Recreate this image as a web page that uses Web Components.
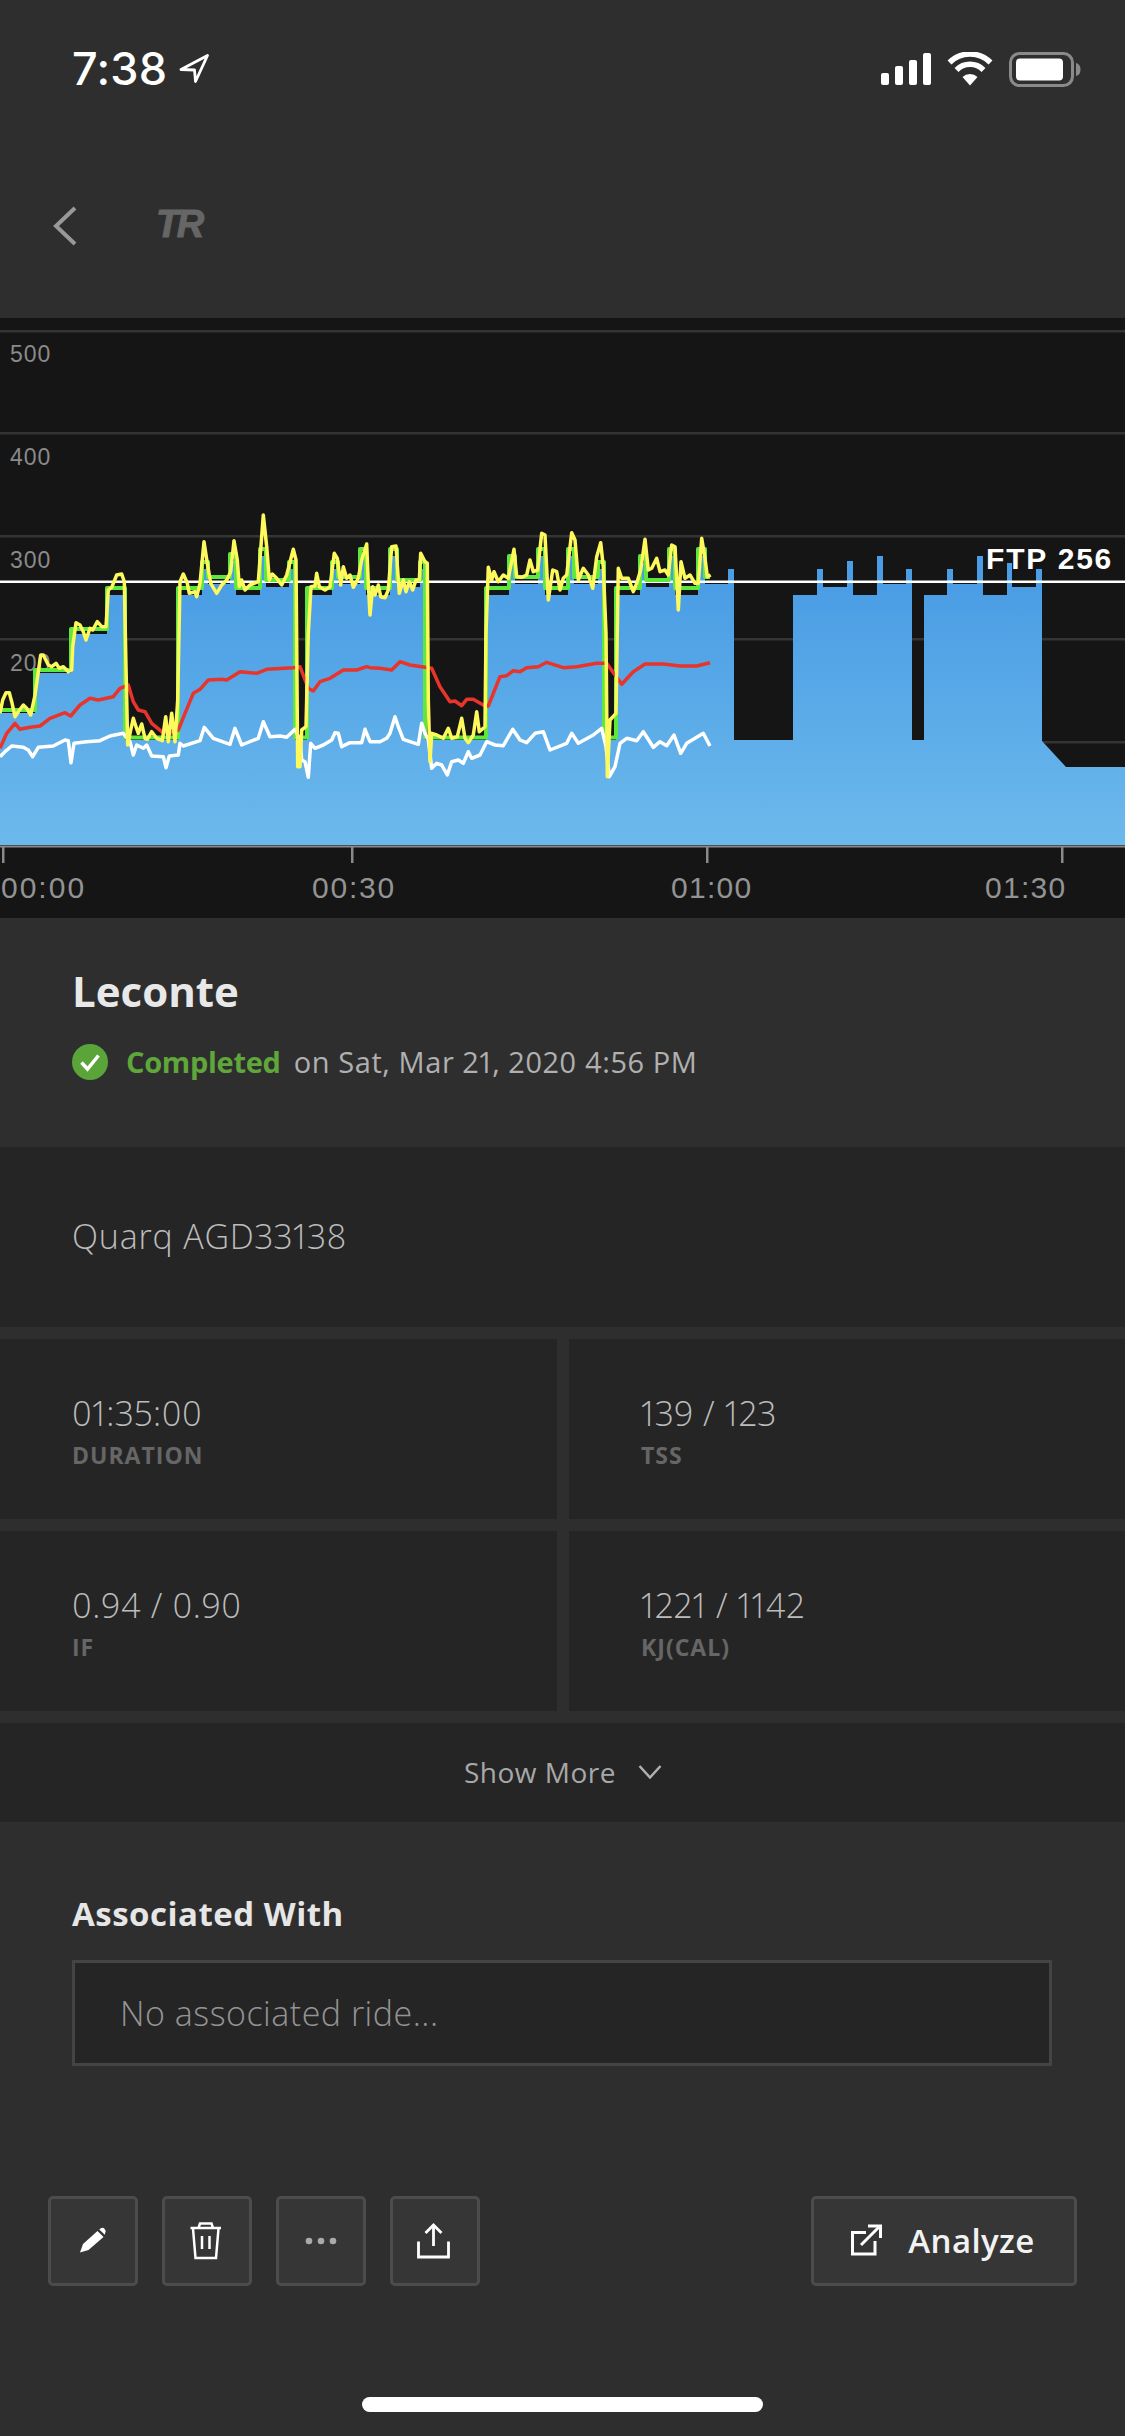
<!DOCTYPE html>
<html>
<head>
<meta charset="utf-8">
<style>
  html, body { margin: 0; padding: 0; background: #2e2e2e; }
  body { width: 1125px; height: 2436px; overflow: hidden; display: flex; flex-direction: column; font-family: "Open Sans", Lato, sans-serif; font-variant-numeric: proportional-nums; }
</style>
</head>
<body>
<status-bar time="7:38"></status-bar>
<nav-bar></nav-bar>
<ride-chart></ride-chart>
<ride-title name="Leconte" status="Completed" date="on Sat, Mar 21, 2020 4:56 PM"></ride-title>
<info-row>Quarq AGD33138</info-row>
<stat-grid>
  <stat-card value="01:35:00" label="DURATION"></stat-card>
  <stat-card value="139 / 123" label="TSS"></stat-card>
  <stat-card value="0.94 / 0.90" label="IF"></stat-card>
  <stat-card value="1221 / 1142" label="KJ(CAL)"></stat-card>
</stat-grid>
<show-more>Show More</show-more>
<associated-with title="Associated With">No associated ride...</associated-with>
<action-bar></action-bar>
<home-indicator></home-indicator>

<script>
class StatusBar extends HTMLElement {
  connectedCallback() {
    this.attachShadow({ mode: 'open' });
    this.shadowRoot.innerHTML = `
      <style>
        :host { display: flex; align-items: flex-start; height: 110px; box-sizing: border-box; padding: 52px 43px 0 72px; color: #fff; }
        .time { font-family: Inter, sans-serif; font-size: 45px; font-weight: 500; line-height: 34px; letter-spacing: 0.2px; }
        .arrow { margin: 2px 0 0 12px; }
        .right { margin-left: auto; display: flex; align-items: flex-start; gap: 16px; }
      </style>
      <span class="time">${this.getAttribute('time')}</span>
      <svg class="arrow" width="30" height="30" viewBox="0 0 30 30"><path d="M28.5 1.5 L2 15.5 L15.5 16 L16.5 27.5 Z" fill="none" stroke="#fff" stroke-width="2.8" stroke-linejoin="round"/></svg>
      <div class="right">
        <svg width="50" height="33" viewBox="0 0 50 33" fill="#fff">
          <rect x="0" y="21" width="8" height="12" rx="2"/>
          <rect x="14" y="14" width="8" height="19" rx="2"/>
          <rect x="28" y="8" width="8" height="25" rx="2"/>
          <rect x="42" y="1" width="8" height="32" rx="2"/>
        </svg>
        <svg width="46" height="34" viewBox="0 0 46 34">
          <path d="M23 33.5 L15.5 25 A11 11 0 0 1 30.5 25 Z" fill="#fff"/>
          <path d="M9.5 18 A19 19 0 0 1 36.5 18" fill="none" stroke="#fff" stroke-width="5.5"/>
          <path d="M2.5 10.5 A29 29 0 0 1 43.5 10.5" fill="none" stroke="#fff" stroke-width="5.5"/>
        </svg>
        <svg width="73" height="35" viewBox="0 0 73 35">
          <rect x="1.5" y="1.5" width="62" height="32" rx="9" fill="none" stroke="#8a8a8a" stroke-width="3"/>
          <rect x="7" y="6.5" width="47" height="22" rx="4" fill="#fff"/>
          <path d="M67 11 Q71.5 12 71.5 17.5 Q71.5 23 67 24 Z" fill="#8a8a8a"/>
        </svg>
      </div>`;
  }
}

class NavBar extends HTMLElement {
  connectedCallback() {
    this.attachShadow({ mode: 'open' });
    this.shadowRoot.innerHTML = `
      <style>
        :host { display: flex; align-items: flex-start; height: 208px; box-sizing: border-box; padding: 96px 0 0 53px; }
        .logo { margin: 3px 0 0 78px; font-family: "Liberation Sans", sans-serif; font-weight: 700; font-style: italic; font-size: 38px; line-height: 30px; letter-spacing: -2.5px; color: #666; -webkit-text-stroke: 1px #666; }
      </style>
      <svg width="25" height="40" viewBox="0 0 25 40"><path d="M22 2 L3 20 L22 38" fill="none" stroke="#999" stroke-width="4"/></svg>
      <span class="logo">TR</span>`;
  }
}

class RideChart extends HTMLElement {
  connectedCallback() {
    // power numbers were read off the reference in zoomed pixels: x = x0 + zx/3, y = 500 + zy/3
    const conv = (pts, x0) => {
      const out = [];
      for (let i = 0; i < pts.length; i += 2) out.push((x0 + pts[i] / 3).toFixed(1) + ',' + (500 + pts[i + 1] / 3).toFixed(1));
      return out.join(' ');
    };
    const line = (a, b) => conv(a, 0) + ' ' + conv(b, 370);

    const yellowA = [0,640,8,600,18,578,28,578,35,605,45,650,55,635,70,615,80,625,92,645,105,585,122,465,130,465,145,495,155,500,168,490,178,505,190,500,205,515,215,510,218,440,228,368,240,375,250,395,258,420,270,385,278,390,292,365,305,380,318,380,325,270,335,262,350,225,365,222,373,245,378,500,383,735,392,690,400,655,408,680,415,700,425,672,435,715,442,718,455,695,470,715,487,722,497,650,505,725,515,640,525,725,533,600,540,245,550,222,562,250,568,280,585,275,590,290,600,250,612,125,622,190,632,250,650,280,665,255,680,240,692,215,702,122,712,180,718,260,725,240,735,270,750,255,775,245,790,45,800,140,808,240,817,222,830,235,845,255,860,225,880,148,888,180,893,800,900,800,905,690,918,680,925,400,933,260,945,258,950,220,958,260,975,270,990,260,1003,160,1012,175,1022,255,1030,200,1040,235,1050,225,1060,262,1075,235,1085,180,1100,132,1105,250];
    const yellowB = [0,345,8,260,15,285,25,255,32,290,45,293,55,270,65,140,78,138,88,280,100,240,108,275,118,245,128,270,138,240,148,240,152,160,165,185,172,190,175,600,180,785,185,700,200,705,220,715,235,685,245,715,262,710,275,655,285,715,295,728,310,705,320,635,328,695,345,680,348,400,355,202,365,240,372,215,385,245,400,225,415,235,432,148,440,230,455,232,470,225,480,180,490,215,503,210,515,100,525,105,535,300,548,210,560,215,570,270,580,235,590,225,605,98,615,120,625,240,640,205,655,225,668,265,680,170,692,128,700,200,708,400,712,830,720,660,738,640,745,205,755,235,775,235,790,275,800,250,812,210,825,118,835,210,845,205,860,175,870,215,885,210,895,225,905,135,915,140,925,330,933,185,945,235,960,225,975,250,985,250,995,115,1005,175,1012,230,1022,225];
    const redA = [0,745,20,700,45,670,60,688,90,682,120,678,150,655,195,638,212,648,240,615,270,595,295,600,340,590,360,565,385,555,400,605,415,630,435,635,455,670,485,695,510,700,535,690,555,640,580,580,600,568,625,540,665,538,680,540,720,515,770,520,800,508,880,503,900,500,925,565,940,573,960,545,990,535,1030,510,1070,510,1100,500];
    const redB = [0,503,30,505,65,510,90,485,120,495,165,502,185,505,210,560,240,605,255,603,275,617,290,598,310,598,345,618,355,618,390,530,410,527,430,512,450,515,470,503,505,500,530,487,580,503,620,500,680,490,710,490,735,525,755,553,790,515,825,492,880,492,930,498,980,498,1020,488];
    const whiteA = [0,770,15,755,35,738,70,742,85,750,98,770,115,742,160,738,195,720,205,722,213,788,222,730,260,725,300,722,330,708,370,700,390,725,400,765,410,735,430,745,440,735,455,768,490,770,498,803,508,768,535,765,540,730,550,738,600,722,613,682,640,715,690,733,705,685,725,735,775,715,790,665,810,710,840,708,860,712,885,688,900,720,905,780,915,785,925,832,932,730,945,745,970,735,995,720,1005,698,1015,700,1025,740,1050,728,1085,728,1095,688,1110,725];
    const whiteB = [0,725,30,725,50,715,60,700,75,650,85,680,100,718,145,733,155,670,165,700,175,720,185,805,200,790,215,795,232,825,245,785,265,780,280,790,295,755,305,775,330,765,350,725,375,735,400,737,428,688,450,720,470,728,495,700,520,695,540,750,590,730,605,700,625,730,670,705,695,685,708,740,718,830,735,800,750,730,770,715,800,722,820,695,850,742,870,725,890,737,912,705,932,760,950,730,1000,700,1020,738];

    // workout profile: [x of the step end, top y]
    const steps = [
      [35,713],[71,673],[107,634],[125,595],[178,740],
      [202,595],[208,569],[230,584],[236,561],[260,595],[266,556],[289,587],[295,569],[307,740],
      [332,595],[338,569],[360,584],[366,556],[390,595],[397,556],[420,587],[425,569],[486,740],
      [509,595],[515,563],[538,584],[545,556],[568,595],[574,556],[598,584],[604,569],[616,740],
      [640,595],[646,563],[669,587],[675,556],[698,595],[705,556],[728,584],[734,569],[793,740],
      [817,595],[823,569],[847,587],[853,561],[877,595],[883,556],[906,584],[912,569],[924,740],
      [947,595],[953,569],[977,584],[983,556],[1007,595],[1012,563],[1036,587],[1042,569]
    ];
    let area = 'M0 845 L0 713';
    let green = '';
    let px = 0;
    steps.forEach(([x, y]) => {
      area += ` L${px} ${y} L${x} ${y}`;
      if (px < 710) {
        const off = y >= 735 ? 2.5 : y >= 670 ? 3 : y >= 630 ? 5 : 7;
        const ex = Math.min(x, 710);
        green += `${green ? ' L' : 'M'}${px} ${y - off} L${ex} ${y - off}`;
      }
      px = x;
    });
    area += ' L1042 741 L1066 767 L1125 767 L1125 845 Z';

    const grid = [331, 433, 536, 639, 742].map(y => `<rect x="0" y="${y - 1}" width="1125" height="2.5" fill="#343434"/>`).join('');
    const ticks = [3, 352, 707, 1062].map(x => `<rect x="${x - 1}" y="846" width="2.5" height="17" fill="#8a8a8a"/>`).join('');
    const yLabels = [[500, 362], [400, 465], [300, 568], [200, 671]].map(([t, y]) => `<text class="y" x="10" y="${y}">${t}</text>`).join('');
    const xLabels = [[1, '00:00', 2], [312, '00:30', 1.8], [671, '01:00', 1.3], [985, '01:30', 1.3]].map(([x, t, s]) => `<text class="t" x="${x}" y="898" letter-spacing="${s}">${t}</text>`).join('');

    this.attachShadow({ mode: 'open' });
    this.shadowRoot.innerHTML = `
      <style>
        :host { display: block; height: 600px; background: #151515; }
        svg { display: block; }
        text { font-family: "Liberation Sans", sans-serif; }
        .y { font-size: 23px; letter-spacing: 1px; fill: #8a8a8a; }
        .t { font-size: 30px; fill: #939393; }
        .ftp { font-size: 30px; font-weight: 700; letter-spacing: 1.8px; fill: #fff; }
        polyline, .g { fill: none; stroke-linejoin: round; }
      </style>
      <svg width="1125" height="600" viewBox="0 318 1125 600">
        <defs>
          <linearGradient id="blue" gradientUnits="userSpaceOnUse" x1="0" y1="590" x2="0" y2="846">
            <stop offset="0" stop-color="#4b9ee5"/>
            <stop offset="1" stop-color="#6cb9ec"/>
          </linearGradient>
        </defs>
        ${grid}
        ${yLabels}
        <path d="${area}" fill="url(#blue)"/>
        <rect x="0" y="580.5" width="1125" height="2.5" fill="#fff"/>
        <path class="g" d="${green}" stroke="#5fe83c" stroke-width="4"/>
        <polyline points="${line(whiteA, whiteB)}" stroke="#fff" stroke-width="3.5"/>
        <polyline points="${line(redA, redB)}" stroke="#e8342a" stroke-width="3.5"/>
        <polyline points="${line(yellowA, yellowB)}" stroke="#fdf95c" stroke-width="3.5"/>
        <text class="ftp" x="986" y="569">FTP 256</text>
        <rect x="0" y="845.5" width="1125" height="2" fill="#8a8a8a"/>
        ${ticks}
        ${xLabels}
      </svg>`;
  }
}

class RideTitle extends HTMLElement {
  connectedCallback() {
    this.attachShadow({ mode: 'open' });
    this.shadowRoot.innerHTML = `
      <style>
        :host { display: block; height: 229px; box-sizing: border-box; padding: 51px 0 0 72px; }
        h1 { margin: 0; font-size: 42px; line-height: 44px; font-weight: 700; color: #e8e8e8; }
        .sub { display: flex; align-items: center; margin-top: 31px; font-size: 29px; line-height: 36px; color: #b0b0b0; }
        svg { margin-right: 18px; }
        b { color: #5fa63b; margin-right: 13px; font-weight: 700; letter-spacing: -0.3px; }
        span { letter-spacing: 0.6px; }
      </style>
      <h1>${this.getAttribute('name')}</h1>
      <div class="sub">
        <svg width="36" height="36" viewBox="0 0 36 36"><circle cx="18" cy="18" r="18" fill="#5aa43a"/><path d="M9.5 18.5 L15.5 25 L26.5 11.5" fill="none" stroke="#fff" stroke-width="3.5"/></svg>
        <b>${this.getAttribute('status')}</b><span>${this.getAttribute('date')}</span>
      </div>`;
  }
}

class InfoRow extends HTMLElement {
  connectedCallback() {
    this.attachShadow({ mode: 'open' });
    this.shadowRoot.innerHTML = `
      <style>
        :host { display: flex; align-items: center; height: 180px; box-sizing: border-box; padding: 0 0 2px 72px; background: #252525; font-size: 34px; font-weight: 300; letter-spacing: 0.8px; color: #bcbcbc; }
      </style>
      <slot></slot>`;
  }
}

class StatGrid extends HTMLElement {
  connectedCallback() {
    this.attachShadow({ mode: 'open' });
    this.shadowRoot.innerHTML = `
      <style>
        :host { display: grid; grid-template-columns: 557px 556px; grid-auto-rows: 180px; gap: 12px; padding: 12px 0; }
      </style>
      <slot></slot>`;
  }
}

class StatCard extends HTMLElement {
  connectedCallback() {
    this.attachShadow({ mode: 'open' });
    this.shadowRoot.innerHTML = `
      <style>
        :host { display: block; box-sizing: border-box; background: #252525; padding: 52px 0 0 72px; }
        .value { font-size: 34px; line-height: 44px; font-weight: 300; letter-spacing: 0.6px; color: #bcbcbc; }
        .label { margin-top: 7px; font-size: 23px; line-height: 26px; font-weight: 700; letter-spacing: 1px; color: #666; }
      </style>
      <div class="value">${this.getAttribute('value')}</div>
      <div class="label">${this.getAttribute('label')}</div>`;
  }
}

class ShowMore extends HTMLElement {
  connectedCallback() {
    this.attachShadow({ mode: 'open' });
    this.shadowRoot.innerHTML = `
      <style>
        :host { display: flex; align-items: center; justify-content: center; gap: 22px; height: 99px; box-sizing: border-box; padding: 0 0 2px 1px; background: #252525; font-size: 28px; font-weight: 400; letter-spacing: 0.5px; color: #a8a8a8; }
      </style>
      <span><slot></slot></span>
      <svg width="24" height="14" viewBox="0 0 24 14"><path d="M1.5 1 L12 12.5 L22.5 1" fill="none" stroke="#b0b0b0" stroke-width="2.5"/></svg>`;
  }
}

class AssociatedWith extends HTMLElement {
  connectedCallback() {
    this.attachShadow({ mode: 'open' });
    this.shadowRoot.innerHTML = `
      <style>
        :host { display: block; height: 374px; box-sizing: border-box; padding: 71px 73px 0 72px; }
        h2 { margin: 0 0 25px; font-size: 33px; line-height: 42px; font-weight: 700; letter-spacing: 0.5px; color: #e6e6e6; }
        .box { display: flex; align-items: center; height: 106px; box-sizing: border-box; padding-left: 45px; background: #252525; border: 3px solid #444; font-size: 34px; font-weight: 300; letter-spacing: 0.5px; color: #949494; }
      </style>
      <h2>${this.getAttribute('title')}</h2>
      <div class="box"><slot></slot></div>`;
  }
}

class ActionButton extends HTMLElement {
  connectedCallback() {
    this.attachShadow({ mode: 'open' });
    this.shadowRoot.innerHTML = `
      <style>
        :host { display: flex; align-items: center; justify-content: center; box-sizing: border-box; height: 90px; min-width: 90px; background: #363636; border: 3px solid #4c4c4c; border-radius: 5px; color: #f2f2f2; font-size: 33px; font-weight: 600; letter-spacing: 0.4px; }
        :host([wide]) { width: 266px; gap: 26px; padding: 0 2px 2px 0; }
      </style>
      <slot></slot>`;
  }
}

class ActionBar extends HTMLElement {
  connectedCallback() {
    this.attachShadow({ mode: 'open' });
    this.shadowRoot.innerHTML = `
      <style>
        :host { display: flex; align-items: flex-start; gap: 24px; height: 201px; box-sizing: border-box; padding: 0 48px; }
        svg { display: block; }
        .end { margin-left: auto; }
      </style>
      <action-button>
        <svg width="40" height="40" viewBox="0 0 40 40" fill="#fff">
          <path d="M7 31.5 L10 23 L24.5 10 L30.5 16 L15.5 29 Z"/>
          <path d="M26.3 8.5 L27.8 7.2 Q30 6 31.7 8 Q33.5 10 32.2 12 L31.8 13.8 Z"/>
        </svg>
      </action-button>
      <action-button>
        <svg width="40" height="40" viewBox="0 0 40 40" fill="none" stroke="#fff" stroke-width="2.5">
          <path d="M3.5 7 H34"/>
          <path d="M11.5 7 L13 2.5 H24.5 L26 7"/>
          <path d="M6 7.5 L8.5 37 H29 L31.5 7.5"/>
          <path d="M15 15 V28 M22.5 15 V28"/>
        </svg>
      </action-button>
      <action-button>
        <svg width="40" height="12" viewBox="0 0 40 12" fill="#aaa">
          <circle cx="8" cy="6" r="3.3"/><circle cx="20" cy="6" r="3.3"/><circle cx="32" cy="6" r="3.3"/>
        </svg>
      </action-button>
      <action-button>
        <svg width="40" height="40" viewBox="0 0 40 40" fill="none" stroke="#fff" stroke-width="2.8">
          <path d="M18.5 4 V25"/>
          <path d="M10.5 12 L18.5 4 L26.5 12"/>
          <path d="M3.5 20.5 V36 H33.5 V20.5"/>
        </svg>
      </action-button>
      <action-button class="end" wide>
        <svg width="31" height="32" viewBox="0 0 31 32" fill="none" stroke="#fff" stroke-width="3">
          <path d="M15 8.5 H1.5 V30 H24 V17"/>
          <path d="M10 21 L28 3"/>
          <path d="M17 2 H29.5 V14"/>
        </svg>
        <span>Analyze</span>
      </action-button>`;
  }
}

class HomeIndicator extends HTMLElement {
  connectedCallback() {
    this.attachShadow({ mode: 'open' });
    this.shadowRoot.innerHTML = `
      <style>
        :host { display: flex; justify-content: center; }
        div { width: 401px; height: 15px; border-radius: 8px; background: #fff; }
      </style>
      <div></div>`;
  }
}

customElements.define('status-bar', StatusBar);
customElements.define('nav-bar', NavBar);
customElements.define('ride-chart', RideChart);
customElements.define('ride-title', RideTitle);
customElements.define('info-row', InfoRow);
customElements.define('stat-grid', StatGrid);
customElements.define('stat-card', StatCard);
customElements.define('show-more', ShowMore);
customElements.define('associated-with', AssociatedWith);
customElements.define('action-button', ActionButton);
customElements.define('action-bar', ActionBar);
customElements.define('home-indicator', HomeIndicator);
</script>
</body>
</html>
